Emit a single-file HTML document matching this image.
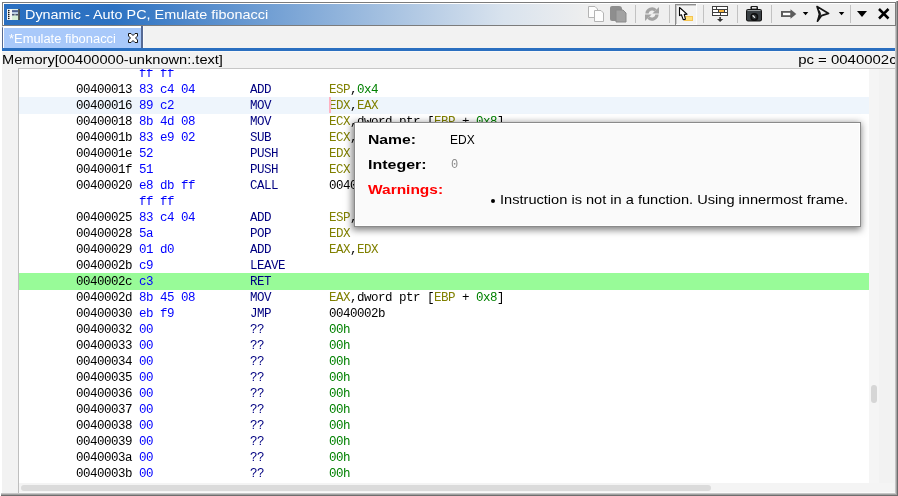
<!DOCTYPE html>
<html><head><meta charset="utf-8">
<style>
*{margin:0;padding:0;box-sizing:border-box}
html,body{width:898px;height:496px;overflow:hidden;background:#fff;position:relative;font-family:"Liberation Sans",sans-serif}
.a{position:absolute}
.t{position:absolute;white-space:pre;line-height:16px;will-change:transform}
.mono{font-family:"Liberation Mono",monospace;font-size:12.5px;letter-spacing:-0.5px}
.adr{color:#000}
.byt{color:#0000ff}
.mn{color:#000080}
.reg{color:#808000}
.num{color:#008000}
.blk{color:#000}
</style></head><body>
<!-- window panel -->
<div class="a" style="left:2px;top:26px;width:893px;height:467px;background:#f2f2f2"></div>
<!-- window dark edges -->
<div class="a" style="left:19px;top:492px;width:876px;height:1px;background:#fafafa"></div>

<div class="a" style="left:895px;top:26px;width:1px;height:468px;background:#c6c6c6"></div>
<div class="a" style="left:896px;top:1px;width:1px;height:494px;background:#a2a2a2"></div>
<div class="a" style="left:897px;top:1px;width:1px;height:495px;background:#6e6e6e"></div>
<div class="a" style="left:1px;top:493px;width:895px;height:1px;background:#c6c6c6"></div>
<div class="a" style="left:1px;top:494px;width:896px;height:1px;background:#a2a2a2"></div>
<div class="a" style="left:1px;top:495px;width:897px;height:1px;background:#6e6e6e"></div>

<!-- title bar -->
<div class="a" style="left:2px;top:2px;width:894px;height:24px;border:1px solid #7c7c7c"></div>
<div class="a" style="left:3px;top:3px;width:892px;height:22px;border-top:1px solid #fff;border-left:1px solid #fff;background:linear-gradient(to right,#2a6fc0 0px,#2d72c2 110px,#d9e3ee 500px,#efefef 585px)"></div>
<div class="t" style="left:25px;top:7px;font-size:13px;color:#fff;transform:scaleX(1.107);transform-origin:0 0">Dynamic - Auto PC, Emulate fibonacci</div>

<!-- toolbar icons -->
<svg class="a" style="left:580px;top:2px" width="315" height="24" viewBox="580 2 315 24">
<g fill="#c2c2c2">
<rect x="635" y="5" width="1" height="18"/><rect x="669" y="5" width="1" height="18"/><rect x="703" y="5" width="1" height="18"/><rect x="737" y="5" width="1" height="18"/><rect x="771" y="5" width="1" height="18"/><rect x="850" y="5" width="1" height="18"/>
</g>
<!-- copy white -->
<path d="M588.5 6.5 H595 L597.5 9 V17.5 H588.5 Z" fill="#fdfdfd" stroke="#b4b4b4"/>
<path d="M594.5 10.5 H601 L603.5 13 V21.5 H594.5 Z" fill="#fdfdfd" stroke="#b4b4b4"/>
<!-- copy gray -->
<path d="M610 8 Q610 6 612 6 H619 Q622 6 622 9 V20 Q622 21 621 21 H612 Q610 21 610 19 Z" fill="#8e8e8e"/>
<path d="M616 10 H623 L626 13 V22 H616 Z" fill="#a2a2a2" stroke="#8a8a8a" stroke-width="1"/>
<!-- refresh -->
<g fill="none" stroke="#a3a3a3" stroke-width="3.3">
<path d="M647 13.5 A5 5 0 0 1 655.5 10.3"/>
<path d="M657 14.5 A5 5 0 0 1 648.5 17.7"/>
</g>
<path d="M659 6.9 V13.5 H652.4 Z" fill="#a3a3a3"/>
<path d="M645 21 V14.5 H651.6 Z" fill="#a3a3a3"/>
<!-- pressed button -->
<rect x="675" y="4" width="22" height="21" fill="#f3f3f3"/>
<rect x="675" y="4" width="21" height="1" fill="#8c8c8c"/>
<rect x="676" y="5" width="20" height="1" fill="#c8c8c8"/>
<rect x="675" y="4" width="1" height="21" fill="#8c8c8c"/>
<rect x="676" y="5" width="1" height="20" fill="#c8c8c8"/>
<rect x="696" y="4" width="1" height="21" fill="#fcfcfc"/>
<rect x="676" y="24" width="21" height="1" fill="#fcfcfc"/>
<!-- cursor + yellow -->
<rect x="684.5" y="16.5" width="8" height="4" fill="#ffe27a" stroke="#f5c452"/>
<path d="M679.5 7.5 V15.6 L681.4 14.8 L683.2 19.6 L685.4 19.2 L684.3 14.4 L687 14.2 Z" fill="#fff" stroke="#000" stroke-width="1.1" stroke-linejoin="round"/>
<!-- table icon -->
<rect x="712" y="6" width="16" height="10" fill="#3e3e3e"/>
<g fill="#fff">
<rect x="713" y="7" width="3" height="2"/><rect x="717" y="7" width="10" height="2"/>
<rect x="713" y="10" width="5" height="2"/><rect x="719" y="10" width="5" height="2"/><rect x="725" y="10" width="2" height="2"/>
<rect x="713" y="13" width="7" height="2"/><rect x="721" y="13" width="6" height="2"/>
</g>
<rect x="719" y="10" width="5" height="2" fill="#f5b43e"/>
<path d="M719.3 17 H720.9 V19 H723.2 L720.1 22 L717 19 H719.3 Z" fill="#333"/>
<!-- camera -->
<rect x="750.5" y="6" width="7.5" height="4" rx="1.2" fill="#1c1c1c"/>
<rect x="752" y="7" width="4.5" height="1.6" fill="#e6e6e6"/>
<rect x="746" y="9" width="16" height="12.5" rx="2.2" fill="#141414"/>
<rect x="747" y="10" width="14" height="10.5" rx="1.2" fill="#3a4044"/>
<rect x="747.5" y="10" width="13" height="1" fill="#9aa0a2"/>
<circle cx="754.3" cy="17" r="4" fill="#0e0e0e"/>
<circle cx="754.3" cy="17" r="2.4" fill="#2c3336"/>
<path d="M753 15.8 L754.6 17.4" stroke="#e8e8e8" stroke-width="1.3" stroke-linecap="round"/>
<!-- hollow arrow -->
<rect x="781" y="11" width="10" height="6" fill="#5c5c5c"/>
<rect x="783" y="12.8" width="7.5" height="2.4" fill="#fff"/>
<path d="M790.5 9.2 L796.3 14 L790.5 18.8 Z" fill="#5c5c5c"/>
<path d="M802.8 12 H808.3 L805.55 15.2 Z" fill="#000"/>
<!-- cursor-ish -->
<path d="M817 6.5 L828.6 13.4 L821.6 15.6 L817.5 21.2 L819.6 14.2 Z" fill="none" stroke="#151515" stroke-width="1.7" stroke-linejoin="round"/>
<path d="M818.6 11 Q820.8 13.2 819.2 17" fill="none" stroke="#151515" stroke-width="2"/>
<path d="M838.8 12 H844.3 L841.55 15.2 Z" fill="#000"/>
<!-- big triangle -->
<path d="M857 11 H867 L862 17 Z" fill="#000"/>
<!-- close X -->
<path d="M879 9 L888.5 18.5 M888.5 9 L879 18.5" stroke="#000" stroke-width="2.5"/>
</svg>
<!-- title icon -->
<svg class="a" style="left:7px;top:9px" width="13" height="11" viewBox="0 0 13 11">
<rect x="0" y="0" width="12.5" height="11" fill="#f6f6f6"/>
<rect x="5" y="0" width="7" height="11" fill="#e2f0e2"/>
<rect x="5" y="6.5" width="7" height="4.5" fill="#d6eed6"/>
<g fill="#000"><circle cx="1.8" cy="1.6" r="0.8"/><circle cx="1.8" cy="3.6" r="0.8"/><circle cx="1.8" cy="5.6" r="0.8"/><circle cx="1.8" cy="7.5" r="0.8"/><circle cx="1.8" cy="9.5" r="0.8"/></g>
<rect x="5" y="1.3" width="6" height="1.5" fill="#2b3c7c"/>
<rect x="5" y="3.3" width="6" height="1.2" fill="#9fb4e0"/>
<rect x="5" y="5.2" width="2.6" height="1.2" fill="#222a55"/><rect x="8.4" y="5.2" width="2.6" height="1.2" fill="#222a55"/>
<rect x="11.3" y="0" width="1.4" height="11" fill="#1e1e1e"/>
</svg>

<!-- tab row -->
<div class="a" style="left:2px;top:26px;width:141px;height:22px;background:#a9c9fa;border-top:2px solid #fff;border-left:1px solid #55688f"></div>
<div class="a" style="left:3px;top:28px;width:1px;height:20px;background:#fff"></div>
<div class="a" style="left:141px;top:26px;width:2px;height:22px;background:#566a94"></div>
<div class="a" style="left:143px;top:26px;width:1px;height:22px;background:#fafafa"></div>
<div class="t" style="left:9px;top:31px;font-size:12px;color:#fff;transform:scaleX(1.076);transform-origin:0 0">*Emulate fibonacci</div>
<!-- tab close X -->
<svg class="a" style="left:128px;top:33px" width="11" height="11" viewBox="0 0 11 11">
<path d="M0.5 0.5 H3 L5 2.5 L7 0.5 H9.5 V3 L7.5 5 L9.5 7 V9.5 H7 L5 7.5 L3 9.5 H0.5 V7 L2.5 5 L0.5 3 Z" fill="#fff" stroke="#151515" stroke-width="1" stroke-linejoin="round"/>
</svg>
<!-- blue bar -->
<div class="a" style="left:2px;top:48px;width:893px;height:3px;background:#2a6fc0"></div>

<!-- header -->
<div class="t" style="left:2px;top:52px;font-size:13px;color:#000;transform:scaleX(1.124);transform-origin:0 0">Memory[00400000-unknown:.text]</div>
<div class="a" style="left:2px;top:51px;width:893px;height:17px;overflow:hidden">
<div class="t" style="right:-2px;top:1px;font-size:13px;color:#000;transform:scaleX(1.15);transform-origin:100% 0">pc = 0040002c</div>
</div>
<div class="a" style="left:18px;top:68px;width:877px;height:1px;background:#c6c6c6"></div>
<div class="a" style="left:2px;top:51px;width:893px;height:1px;background:#f8f8f8"></div>

<!-- listing box -->
<div class="a" style="left:18px;top:68px;width:1px;height:425px;background:#bebebe"></div>
<div class="a" style="left:19px;top:69px;width:850px;height:414px;background:#fff"></div>
<div class="a" style="left:869px;top:69px;width:10px;height:414px;background:#f5f5f5"></div>
<div class="a" style="left:871px;top:385px;width:6px;height:18px;background:#d6d6d6;border-radius:3px"></div>
<div class="a" style="left:19px;top:483px;width:875px;height:9px;background:#f4f4f4"></div>
<div class="a" style="left:21px;top:485px;width:690px;height:6px;background:#dbdbdb;border-radius:3px"></div>

<div id="listing" class="a" style="left:19px;top:69px;width:850px;height:414px;overflow:hidden;will-change:transform">
<!--LIST-->
<div class="t mono byt" style="left:120px;top:-3px">ff ff</div>
<div class="t mono adr" style="left:57px;top:13px">00400013</div>
<div class="t mono byt" style="left:120px;top:13px">83 c4 04</div>
<div class="t mono mn" style="left:231px;top:13px">ADD</div>
<div class="t mono" style="left:310px;top:13px"><span class="reg">ESP</span><span class="blk">,</span><span class="num">0x4</span></div>
<div class="a" style="left:0;top:28px;width:850px;height:17px;background:#eef5fc"></div>
<div class="t mono adr" style="left:57px;top:29px">00400016</div>
<div class="t mono byt" style="left:120px;top:29px">89 c2</div>
<div class="t mono mn" style="left:231px;top:29px">MOV</div>
<div class="t mono" style="left:310px;top:29px"><span class="reg">EDX</span><span class="blk">,</span><span class="reg">EAX</span></div>
<div class="a" style="left:310px;top:28px;width:2px;height:16px;background:#ffb3c3"></div>
<div class="t mono adr" style="left:57px;top:45px">00400018</div>
<div class="t mono byt" style="left:120px;top:45px">8b 4d 08</div>
<div class="t mono mn" style="left:231px;top:45px">MOV</div>
<div class="t mono" style="left:310px;top:45px"><span class="reg">ECX</span><span class="blk">,dword ptr [</span><span class="reg">EBP</span><span class="blk"> + </span><span class="num">0x8</span><span class="blk">]</span></div>
<div class="t mono adr" style="left:57px;top:61px">0040001b</div>
<div class="t mono byt" style="left:120px;top:61px">83 e9 02</div>
<div class="t mono mn" style="left:231px;top:61px">SUB</div>
<div class="t mono" style="left:310px;top:61px"><span class="reg">ECX</span><span class="blk">,</span><span class="num">0x2</span></div>
<div class="t mono adr" style="left:57px;top:77px">0040001e</div>
<div class="t mono byt" style="left:120px;top:77px">52</div>
<div class="t mono mn" style="left:231px;top:77px">PUSH</div>
<div class="t mono" style="left:310px;top:77px"><span class="reg">EDX</span></div>
<div class="t mono adr" style="left:57px;top:93px">0040001f</div>
<div class="t mono byt" style="left:120px;top:93px">51</div>
<div class="t mono mn" style="left:231px;top:93px">PUSH</div>
<div class="t mono" style="left:310px;top:93px"><span class="reg">ECX</span></div>
<div class="t mono adr" style="left:57px;top:109px">00400020</div>
<div class="t mono byt" style="left:120px;top:109px">e8 db ff</div>
<div class="t mono mn" style="left:231px;top:109px">CALL</div>
<div class="t mono" style="left:310px;top:109px"><span class="blk">00400000</span></div>
<div class="t mono byt" style="left:120px;top:125px">ff ff</div>
<div class="t mono adr" style="left:57px;top:141px">00400025</div>
<div class="t mono byt" style="left:120px;top:141px">83 c4 04</div>
<div class="t mono mn" style="left:231px;top:141px">ADD</div>
<div class="t mono" style="left:310px;top:141px"><span class="reg">ESP</span><span class="blk">,</span><span class="num">0x4</span></div>
<div class="t mono adr" style="left:57px;top:157px">00400028</div>
<div class="t mono byt" style="left:120px;top:157px">5a</div>
<div class="t mono mn" style="left:231px;top:157px">POP</div>
<div class="t mono" style="left:310px;top:157px"><span class="reg">EDX</span></div>
<div class="t mono adr" style="left:57px;top:173px">00400029</div>
<div class="t mono byt" style="left:120px;top:173px">01 d0</div>
<div class="t mono mn" style="left:231px;top:173px">ADD</div>
<div class="t mono" style="left:310px;top:173px"><span class="reg">EAX</span><span class="blk">,</span><span class="reg">EDX</span></div>
<div class="t mono adr" style="left:57px;top:189px">0040002b</div>
<div class="t mono byt" style="left:120px;top:189px">c9</div>
<div class="t mono mn" style="left:231px;top:189px">LEAVE</div>
<div class="a" style="left:0;top:204px;width:850px;height:17px;background:#98fb98"></div>
<div class="t mono adr" style="left:57px;top:205px">0040002c</div>
<div class="t mono byt" style="left:120px;top:205px">c3</div>
<div class="t mono mn" style="left:231px;top:205px">RET</div>
<div class="t mono adr" style="left:57px;top:221px">0040002d</div>
<div class="t mono byt" style="left:120px;top:221px">8b 45 08</div>
<div class="t mono mn" style="left:231px;top:221px">MOV</div>
<div class="t mono" style="left:310px;top:221px"><span class="reg">EAX</span><span class="blk">,dword ptr [</span><span class="reg">EBP</span><span class="blk"> + </span><span class="num">0x8</span><span class="blk">]</span></div>
<div class="t mono adr" style="left:57px;top:237px">00400030</div>
<div class="t mono byt" style="left:120px;top:237px">eb f9</div>
<div class="t mono mn" style="left:231px;top:237px">JMP</div>
<div class="t mono" style="left:310px;top:237px"><span class="blk">0040002b</span></div>
<div class="t mono adr" style="left:57px;top:253px">00400032</div>
<div class="t mono byt" style="left:120px;top:253px">00</div>
<div class="t mono mn" style="left:231px;top:253px">??</div>
<div class="t mono" style="left:310px;top:253px"><span class="num">00h</span></div>
<div class="t mono adr" style="left:57px;top:269px">00400033</div>
<div class="t mono byt" style="left:120px;top:269px">00</div>
<div class="t mono mn" style="left:231px;top:269px">??</div>
<div class="t mono" style="left:310px;top:269px"><span class="num">00h</span></div>
<div class="t mono adr" style="left:57px;top:285px">00400034</div>
<div class="t mono byt" style="left:120px;top:285px">00</div>
<div class="t mono mn" style="left:231px;top:285px">??</div>
<div class="t mono" style="left:310px;top:285px"><span class="num">00h</span></div>
<div class="t mono adr" style="left:57px;top:301px">00400035</div>
<div class="t mono byt" style="left:120px;top:301px">00</div>
<div class="t mono mn" style="left:231px;top:301px">??</div>
<div class="t mono" style="left:310px;top:301px"><span class="num">00h</span></div>
<div class="t mono adr" style="left:57px;top:317px">00400036</div>
<div class="t mono byt" style="left:120px;top:317px">00</div>
<div class="t mono mn" style="left:231px;top:317px">??</div>
<div class="t mono" style="left:310px;top:317px"><span class="num">00h</span></div>
<div class="t mono adr" style="left:57px;top:333px">00400037</div>
<div class="t mono byt" style="left:120px;top:333px">00</div>
<div class="t mono mn" style="left:231px;top:333px">??</div>
<div class="t mono" style="left:310px;top:333px"><span class="num">00h</span></div>
<div class="t mono adr" style="left:57px;top:349px">00400038</div>
<div class="t mono byt" style="left:120px;top:349px">00</div>
<div class="t mono mn" style="left:231px;top:349px">??</div>
<div class="t mono" style="left:310px;top:349px"><span class="num">00h</span></div>
<div class="t mono adr" style="left:57px;top:365px">00400039</div>
<div class="t mono byt" style="left:120px;top:365px">00</div>
<div class="t mono mn" style="left:231px;top:365px">??</div>
<div class="t mono" style="left:310px;top:365px"><span class="num">00h</span></div>
<div class="t mono adr" style="left:57px;top:381px">0040003a</div>
<div class="t mono byt" style="left:120px;top:381px">00</div>
<div class="t mono mn" style="left:231px;top:381px">??</div>
<div class="t mono" style="left:310px;top:381px"><span class="num">00h</span></div>
<div class="t mono adr" style="left:57px;top:397px">0040003b</div>
<div class="t mono byt" style="left:120px;top:397px">00</div>
<div class="t mono mn" style="left:231px;top:397px">??</div>
<div class="t mono" style="left:310px;top:397px"><span class="num">00h</span></div>
<!--/LIST-->
</div>

<!-- tooltip -->
<div class="a" style="left:19px;top:69px;width:850px;height:414px;overflow:hidden"><div class="a" style="left:335px;top:53px;width:507px;height:105px;background:#fafafa;border:1px solid #8a8a8a;box-shadow:-1px 2px 7px 1px rgba(0,0,0,0.5),inset 0 0 0 1px #fff"></div></div>
<div class="t" style="left:368px;top:132px;font-size:13px;font-weight:bold;color:#000;transform:scaleX(1.21);transform-origin:0 0">Name:</div>
<div class="t" style="left:450px;top:132px;font-size:12px;color:#000">EDX</div>
<div class="t" style="left:368px;top:157px;font-size:13px;font-weight:bold;color:#000;transform:scaleX(1.23);transform-origin:0 0">Integer:</div>
<div class="t mono" style="left:451px;top:157px;font-size:12px;color:#8c8c8c">0</div>
<div class="t" style="left:368px;top:182px;font-size:13px;font-weight:bold;color:#ff0000;transform:scaleX(1.19);transform-origin:0 0">Warnings:</div>
<div class="a" style="left:491px;top:199px;width:4px;height:4px;border-radius:2px;background:#000"></div>
<div class="t" style="left:500px;top:192px;font-size:13px;color:#000;transform:scaleX(1.123);transform-origin:0 0">Instruction is not in a function. Using innermost frame.</div>
</body></html>
